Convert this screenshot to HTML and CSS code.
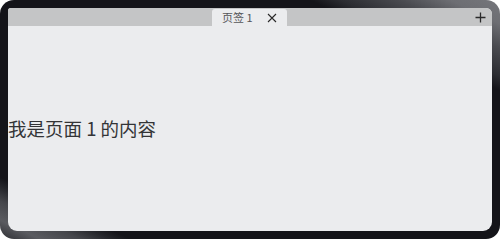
FILE: index.html
```html
<!DOCTYPE html>
<html lang="zh">
<head>
<meta charset="utf-8">
<link rel="stylesheet" href="styles.css">
</head>
<body>
<div class="frame">
  <div class="panel">
    <div class="tabbar">
      <div class="tab">
        <span class="tab-title">页签 1</span>
        <svg class="tab-close" width="10" height="10" viewBox="0 0 10 10"><path d="M1 1L9 9M9 1L1 9" stroke="#2a2a2a" stroke-width="1.1" fill="none"/></svg>
      </div>
      <svg class="tab-add" width="11" height="11" viewBox="0 0 11 11"><path d="M5.5 0.5V10.5M0.5 5.5H10.5" stroke="#2a2a2a" stroke-width="1.3" fill="none"/></svg>
    </div>
    <div class="content">
      <p class="content-text">我是页面 1 的内容</p>
    </div>
  </div>
</div>
</body>
</html>
```
FILE: styles.css
```css
html, body {
  margin: 0;
  padding: 0;
  background: #ffffff;
}
.frame {
  width: 500px;
  height: 239px;
  box-sizing: border-box;
  padding: 8px;
  border-radius: 14px;
  background: linear-gradient(to top right,
    #2e2f34 0%, #5a5b60 4%, #45464b 8%, #25262b 11%, #141419 13%,
    #141419 81%, #2b2c31 84%, #4a4b50 90%, #6d6e73 95%, #75767b 100%);
  display: flex;
}
.panel {
  flex: 1;
  display: flex;
  flex-direction: column;
  background: #ebecee;
  border-radius: 3px 6px 9px 9px;
  overflow: hidden;
}
.tabbar {
  height: 18px;
  background: #c4c5c6;
  display: flex;
  align-items: flex-end;
  position: relative;
  padding-left: 204px;
}
.tab {
  width: 75px;
  height: 17px;
  box-sizing: border-box;
  background: #ebecee;
  border-radius: 3px 3px 0 0;
  display: flex;
  align-items: center;
  padding-left: 10px;
  gap: 14px;
}
.tab-title {
  font-family: "Noto Sans CJK SC", "Noto Sans", sans-serif;
  font-size: 11px;
  color: #555659;
  line-height: 17px;
}
.tab-close {
  display: block;
}
.tab-add {
  position: absolute;
  right: 6px;
  top: 4px;
}
.content {
  flex: 1;
  display: flex;
  align-items: center;
}
.content-text {
  margin: 0;
  font-family: "Noto Sans CJK SC", "Noto Sans", sans-serif;
  font-size: 18.5px;
  color: #333436;
  line-height: 22px;
  padding-bottom: 1px;
}
```
